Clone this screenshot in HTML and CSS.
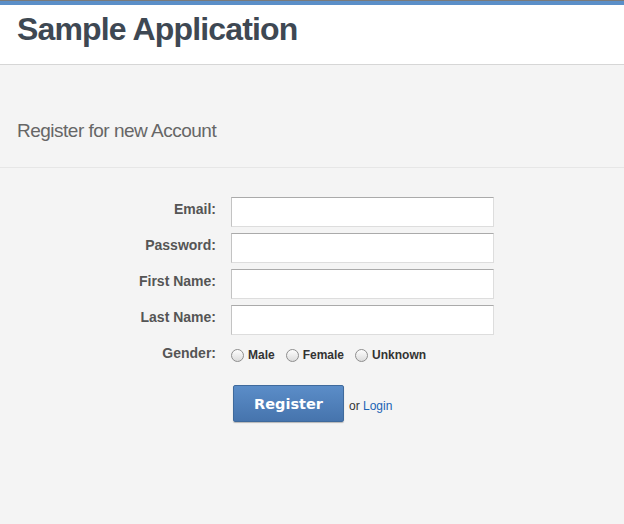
FILE: index.html
```html
<!DOCTYPE html>
<html>
<head>
<meta charset="utf-8">
<title>Sample Application</title>
<link rel="stylesheet" href="styles.css">
</head>
<body>
<header class="topbar">
  <h1 class="brand">Sample Application</h1>
</header>
<section class="page-head">
  <h2 class="page-title">Register for new Account</h2>
</section>
<form class="reg-form">
  <label class="lbl" for="email">Email:</label>
  <input class="txt" id="email" type="text">
  <label class="lbl" for="pw">Password:</label>
  <input class="txt" id="pw" type="password">
  <label class="lbl" for="fn">First Name:</label>
  <input class="txt" id="fn" type="text">
  <label class="lbl" for="ln">Last Name:</label>
  <input class="txt" id="ln" type="text">
  <span class="lbl">Gender:</span>
  <div class="radios">
    <label class="opt"><input class="rad" type="radio" name="g"> Male</label>
    <label class="opt"><input class="rad" type="radio" name="g"> Female</label>
    <label class="opt"><input class="rad" type="radio" name="g"> Unknown</label>
  </div>
  <span></span>
  <div class="actions">
    <button class="btn" type="button">Register</button>
    <span class="or">or <a href="#" class="login">Login</a></span>
  </div>
</form>
</body>
</html>
```
FILE: styles.css
```css
html, body {
  margin: 0;
  padding: 0;
}
body {
  background: #f4f4f4;
  font-family: "Liberation Sans", Arial, sans-serif;
  min-height: 524px;
}
.topbar {
  background: #fff;
  border-top: 1px solid #7a7a7a;
  box-shadow: inset 0 4px 0 #5b8fc8;
  border-bottom: 1px solid #d6d6d6;
  box-sizing: border-box;
  height: 65px;
  padding: 10px 17px 0;
}
.brand {
  margin: 0;
  font-size: 32px;
  font-weight: bold;
  color: #3e4853;
  letter-spacing: -0.85px;
}
.page-head {
  height: 103px;
  box-sizing: border-box;
  border-bottom: 1px solid #e6e6e6;
  padding: 55px 17px 0;
}
.page-title {
  margin: 0;
  font-size: 19px;
  font-weight: normal;
  color: #666;
  letter-spacing: -0.5px;
}
.reg-form {
  display: grid;
  grid-template-columns: 201px 263px;
  column-gap: 15px;
  row-gap: 6px;
  padding: 29px 0 0 15px;
  align-items: start;
}
.lbl {
  text-align: right;
  font-size: 14px;
  font-weight: bold;
  color: #555;
  padding-top: 4px;
}
.txt {
  height: 30px;
  box-sizing: border-box;
  margin: 0;
  border: 1px solid #ddd;
  border-top-color: #aaa;
  border-left-color: #c3c3c3;
  background: #fff;
  outline: none;
}
.radios {
  display: flex;
  gap: 11px;
  height: 28px;
  align-items: center;
  font-size: 12px;
  font-weight: bold;
  color: #333;
}
.opt {
  display: flex;
  align-items: center;
  gap: 4px;
}
.rad {
  appearance: none;
  -webkit-appearance: none;
  width: 13px;
  height: 13px;
  margin: 0;
  border-radius: 50%;
  border: 1px solid #8e8e8e;
  background: linear-gradient(#fdfdfd, #dcdcdc);
  box-sizing: border-box;
}
.actions {
  display: flex;
  align-items: center;
  gap: 5px;
  margin-top: 10px;
  padding-left: 2px;
}
.btn {
  width: 111px;
  height: 37px;
  border: 1px solid #3f6a9c;
  border-radius: 2px;
  background: linear-gradient(#5b8dc8, #4674ad);
  color: #fff;
  font-family: "DejaVu Sans", sans-serif;
  font-weight: bold;
  font-size: 14.5px;
  box-shadow: 0 1px 1px rgba(0,0,0,0.25);
  padding: 0;
}
.or {
  font-size: 12px;
  color: #333;
  padding-top: 4px;
}
.login {
  color: #1a63b5;
  text-decoration: none;
}
```
